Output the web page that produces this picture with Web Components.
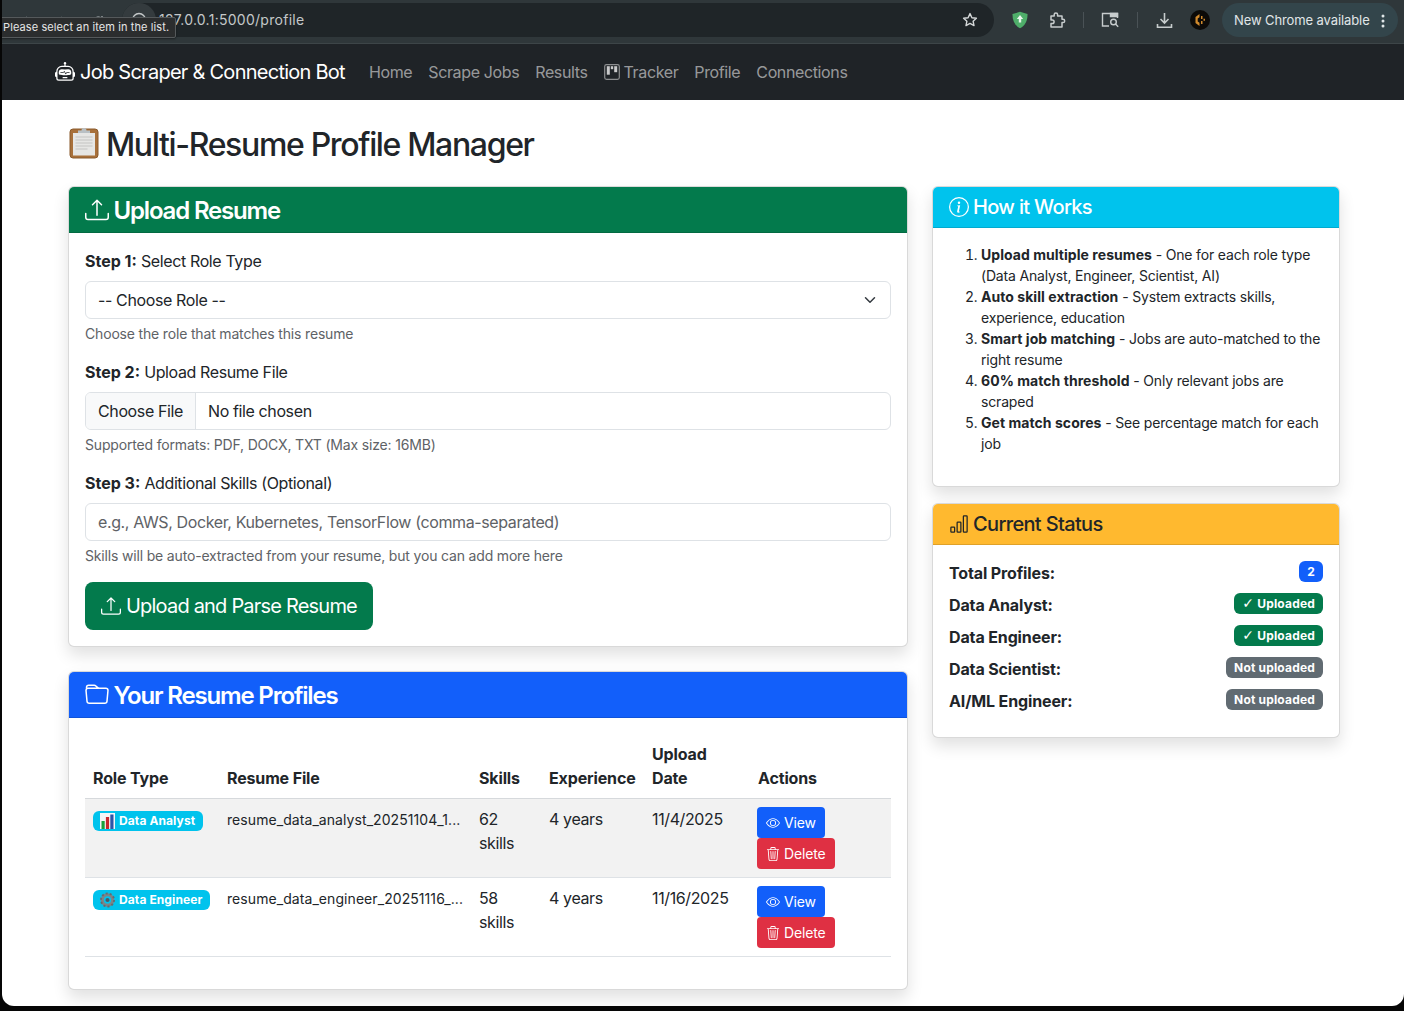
<!DOCTYPE html>
<html lang="en">
<head>
<meta charset="utf-8">
<title>Multi-Resume Profile Manager</title>
<style>
html, body { margin: 0; height: 100%; overflow: hidden; background: #060606; }
body { font-family: Inter, "Liberation Sans", sans-serif; font-size: 16px; line-height: 1.5; color: #212529; }
</style>
</head>
<body>
<app-window>
  <browser-bar></browser-bar>
  <nav-bar></nav-bar>
  <page-main>
    <page-title slot="title">Multi-Resume Profile Manager</page-title>
    <app-card slot="left" tone="success" size="24" icon="upload" heading="Upload Resume">
      <form-step label="Step 1:" rest="Select Role Type" help="Choose the role that matches this resume">
        <select-box>-- Choose Role --</select-box>
      </form-step>
      <form-step label="Step 2:" rest="Upload Resume File" help="Supported formats: PDF, DOCX, TXT (Max size: 16MB)">
        <file-box></file-box>
      </form-step>
      <form-step label="Step 3:" rest="Additional Skills (Optional)" help="Skills will be auto-extracted from your resume, but you can add more here">
        <text-box>e.g., AWS, Docker, Kubernetes, TensorFlow (comma-separated)</text-box>
      </form-step>
      <big-button>Upload and Parse Resume</big-button>
    </app-card>
    <app-card slot="left" tone="primary" size="24" icon="folder" heading="Your Resume Profiles">
      <profile-table></profile-table>
    </app-card>
    <app-card slot="right" tone="info" size="20" icon="info" heading="How it Works">
      <how-list></how-list>
    </app-card>
    <app-card slot="right" tone="warning" size="20" icon="bars" heading="Current Status">
      <status-row label="Total Profiles:" tone="primary">2</status-row>
      <status-row label="Data Analyst:" tone="success"><span style="font-family:'DejaVu Sans',sans-serif;font-size:14px;line-height:1">✓</span> Uploaded</status-row>
      <status-row label="Data Engineer:" tone="success"><span style="font-family:'DejaVu Sans',sans-serif;font-size:14px;line-height:1">✓</span> Uploaded</status-row>
      <status-row label="Data Scientist:" tone="muted">Not uploaded</status-row>
      <status-row label="AI/ML Engineer:" tone="muted">Not uploaded</status-row>
    </app-card>
  </page-main>
</app-window>
<script>
var fontStack = 'Inter, "Liberation Sans", sans-serif'
var tones = {
  success: ['#037a4c', '#fff'],
  primary: ['#125ffa', '#fff'],
  info: ['#00c3ed', '#fff'],
  warning: ['#ffb92f', '#212529'],
  danger: ['#df3043', '#fff'],
  muted: ['#616b72', '#fff']
}
var iconPaths = {
  upload: '<path d="M.5 9.9a.5.5 0 0 1 .5.5v2.5a1 1 0 0 0 1 1h12a1 1 0 0 0 1-1v-2.5a.5.5 0 0 1 1 0v2.5a2 2 0 0 1-2 2H2a2 2 0 0 1-2-2v-2.5a.5.5 0 0 1 .5-.5z"/><path d="M7.646 1.146a.5.5 0 0 1 .708 0l3 3a.5.5 0 0 1-.708.708L8.5 2.707V11.5a.5.5 0 0 1-1 0V2.707L5.354 4.854a.5.5 0 1 1-.708-.708l3-3z"/>',
  folder: '<path d="M.54 3.87.5 3a2 2 0 0 1 2-2h3.672a2 2 0 0 1 1.414.586l.828.828A2 2 0 0 0 9.828 3h3.982a2 2 0 0 1 1.992 2.181l-.637 7A2 2 0 0 1 13.174 14H2.826a2 2 0 0 1-1.991-1.819l-.637-7a1.99 1.99 0 0 1 .342-1.31zM2.19 4a1 1 0 0 0-.996 1.09l.637 7a1 1 0 0 0 .995.91h10.348a1 1 0 0 0 .995-.91l.637-7A1 1 0 0 0 13.81 4H2.19zm4.69-1.707A1 1 0 0 0 6.172 2H2.5a1 1 0 0 0-1 .981l.006.139C1.72 3.042 1.95 3 2.19 3h5.396l-.707-.707z"/>',
  info: '<path d="M8 15A7 7 0 1 1 8 1a7 7 0 0 1 0 14zm0 1A8 8 0 1 0 8 0a8 8 0 0 0 0 16z"/><path d="m8.93 6.588-2.29.287-.082.38.45.083c.294.07.352.176.288.469l-.738 3.468c-.194.897.105 1.319.808 1.319.545 0 1.178-.252 1.465-.598l.088-.416c-.2.176-.492.246-.686.246-.275 0-.375-.193-.304-.533L8.93 6.588zM9 4.5a1 1 0 1 1-2 0 1 1 0 0 1 2 0z"/>',
  bars: '<path d="M4 11H2v3h2v-3zm5-4H7v7h2V7zm5-5v12h-2V2h2zm-2-1a1 1 0 0 0-1 1v12a1 1 0 0 0 1 1h2a1 1 0 0 0 1-1V2a1 1 0 0 0-1-1h-2zM6 7a1 1 0 0 1 1-1h2a1 1 0 0 1 1 1v7a1 1 0 0 1-1 1H7a1 1 0 0 1-1-1V7zm-5 4a1 1 0 0 1 1-1h2a1 1 0 0 1 1 1v3a1 1 0 0 1-1 1H2a1 1 0 0 1-1-1v-3z"/>',
  eye: '<path d="M16 8s-3-5.5-8-5.5S0 8 0 8s3 5.5 8 5.5S16 8 16 8zM1.173 8a13.133 13.133 0 0 1 1.66-2.043C4.12 4.668 5.88 3.5 8 3.5c2.12 0 3.879 1.168 5.168 2.457A13.133 13.133 0 0 1 14.828 8c-.058.087-.122.183-.195.288-.335.48-.83 1.12-1.465 1.755C11.879 11.332 10.119 12.5 8 12.5c-2.12 0-3.879-1.168-5.168-2.457A13.134 13.134 0 0 1 1.172 8z"/><path d="M8 5.5a2.5 2.5 0 1 0 0 5 2.5 2.5 0 0 0 0-5zM4.5 8a3.5 3.5 0 1 1 7 0 3.5 3.5 0 0 1-7 0z"/>',
  trash: '<path d="M6.5 1h3a.5.5 0 0 1 .5.5v1H6v-1a.5.5 0 0 1 .5-.5ZM11 2.5v-1A1.5 1.5 0 0 0 9.5 0h-3A1.5 1.5 0 0 0 5 1.5v1H2.506a.58.58 0 0 0-.01 0H1.5a.5.5 0 0 0 0 1h.538l.853 10.66A2 2 0 0 0 4.885 16h6.23a2 2 0 0 0 1.994-1.84l.853-10.66h.538a.5.5 0 0 0 0-1h-.995a.59.59 0 0 0-.01 0H11Zm1.958 1-.846 10.58a1 1 0 0 1-.997.92h-6.23a1 1 0 0 1-.997-.92L3.042 3.5h9.916Zm-7.487 1a.5.5 0 0 1 .528.47l.5 8.5a.5.5 0 0 1-.998.06L5 5.03a.5.5 0 0 1 .47-.53Zm5.058 0a.5.5 0 0 1 .47.53l-.5 8.5a.5.5 0 1 1-.998-.06l.5-8.5a.5.5 0 0 1 .528-.47ZM8 4.5a.5.5 0 0 1 .5.5v8.5a.5.5 0 0 1-1 0V5a.5.5 0 0 1 .5-.5Z"/>',
  robot: '<path d="M6 12.5a.5.5 0 0 1 .5-.5h3a.5.5 0 0 1 0 1h-3a.5.5 0 0 1-.5-.5ZM3 8.062C3 6.76 4.235 5.765 5.53 5.886a26.58 26.58 0 0 0 4.94 0C11.765 5.765 13 6.76 13 8.062v1.157a.933.933 0 0 1-.765.935c-.845.147-2.34.346-4.235.346-1.895 0-3.39-.2-4.235-.346A.933.933 0 0 1 3 9.219V8.062Zm4.542-.827a.25.25 0 0 0-.217.068l-.92.9a24.767 24.767 0 0 1-1.871-.183.25.25 0 0 0-.068.495c.55.076 1.232.149 2.02.193a.25.25 0 0 0 .189-.071l.754-.736.847 1.71a.25.25 0 0 0 .404.062l.932-.97a25.286 25.286 0 0 0 1.922-.188.25.25 0 0 0-.068-.495c-.538.074-1.207.145-1.98.189a.25.25 0 0 0-.166.076l-.754.785-.842-1.7a.25.25 0 0 0-.182-.135Z"/><path d="M8.5 1.866a1 1 0 1 0-1 0V3h-2A4.5 4.5 0 0 0 1 7.5V8a1 1 0 0 0-1 1v2a1 1 0 0 0 1 1v1a2 2 0 0 0 2 2h10a2 2 0 0 0 2-2v-1a1 1 0 0 0 1-1V9a1 1 0 0 0-1-1v-.5A4.5 4.5 0 0 0 10.5 3h-2V1.866ZM14 7.5V13a1 1 0 0 1-1 1H3a1 1 0 0 1-1-1V7.5A3.5 3.5 0 0 1 5.5 4h5A3.5 3.5 0 0 1 14 7.5Z"/>',
  chevron: '<path fill="none" stroke="currentColor" stroke-width="2" stroke-linecap="round" stroke-linejoin="round" d="m2 5 6 6 6-6"/>'
}
function icon(name, size) {
  return `<svg width="${size}" height="${size}" viewBox="0 0 16 16" fill="currentColor" style="display:block;flex:none">${iconPaths[name]}</svg>`
}
var chartEmoji = `<svg width="15" height="16" viewBox="0 0 15 16" style="display:block;flex:none"><rect x="0" y="0" width="15" height="16" fill="#f4f6f7"/><rect x="1.5" y="8" width="3.2" height="8" fill="#1aa03c"/><rect x="5.9" y="4" width="3.2" height="12" fill="#c8262c"/><rect x="10.3" y="1.5" width="3.2" height="14.5" fill="#2c55a8"/></svg>`
var gearEmoji = `<svg width="15" height="16" viewBox="0 0 16 16" style="display:block;flex:none"><circle cx="8" cy="8" r="5.6" fill="none" stroke="#7c8488" stroke-width="3.4"/><circle cx="8" cy="8" r="7" fill="none" stroke="#656c70" stroke-width="2" stroke-dasharray="2.2 2.2"/><circle cx="8" cy="8" r="2.2" fill="#4a5a66"/></svg>`

class AppWindow extends HTMLElement {
  connectedCallback() {
    var shadow = this.attachShadow({mode: 'open'})
    shadow.innerHTML = `<style>
:host {
  display: flex;
  flex-direction: column;
  height: 1006px;
  margin-left: 2px;
  background: #fff;
  border-radius: 0 0 12px 12px;
  overflow: hidden;
}
</style><slot></slot>`
  }
}
customElements.define('app-window', AppWindow)

class BrowserBar extends HTMLElement {
  connectedCallback() {
    var shadow = this.attachShadow({mode: 'open'})
    shadow.innerHTML = `<style>
:host {
  display: flex;
  align-items: center;
  height: 43px;
  flex: none;
  margin-left: -2px;
  background: #2f373a;
  border-bottom: 1px solid #3d4548;
  color: #c7cccd;
  font-family: ${fontStack};
  position: relative;
}
#navs { display: flex; gap: 22px; width: 122px; padding-left: 19px; box-sizing: border-box; flex: none; }
#pill {
  width: 872px;
  height: 34px;
  margin-top: -3px;
  background: #1f2528;
  border-radius: 17px;
  display: flex;
  align-items: center;
  box-sizing: border-box;
  flex: none;
}
#site {
  width: 34px; height: 34px; border-radius: 50%;
  background: #343b3e; display: flex; align-items: center; justify-content: center; flex: none;
}
#url { margin-left: 3px; font-size: 14px; letter-spacing: .27px; color: #c4c8c9; flex: 1; margin-top: -1px; }
#star { margin-right: 16px; }
#tools { display: flex; align-items: center; margin-top: -3px; flex: none; }
.sep { width: 1px; height: 16px; background: #4a5256; }
#avatar { width: 20px; height: 20px; border-radius: 50%; background: #0c0a08; display: flex; align-items: center; justify-content: center; }
#update {
  margin-left: 12px;
  width: 176px; height: 34px; box-sizing: border-box;
  background: #33454b; border-radius: 17px;
  padding: 1px 0 0 12px;
  display: flex; align-items: center; justify-content: space-between;
  font-size: 13px; letter-spacing: -.1px; color: #e0e6e8; white-space: nowrap;
}
#tip {
  position: absolute; left: 0; top: 17px;
  height: 21px; width: 176px; box-sizing: border-box;
  background: #2b2d2e; border: 1px solid #55595b; border-radius: 2px;
  padding-left: 2px;
  font-size: 11px; letter-spacing: .1px; line-height: 19px; color: #e6e6e6; white-space: nowrap;
  box-shadow: 0 1px 2px rgba(0,0,0,.4);
}
</style>
<div id="navs">
  <svg width="14" height="14" viewBox="0 0 14 14" fill="none" stroke="#9aa0a2" stroke-width="1.5"><path d="M8 2 3 7l5 5"/></svg>
  <svg width="14" height="14" viewBox="0 0 14 14" fill="none" stroke="#6f7678" stroke-width="1.5"><path d="m6 2 5 5-5 5"/></svg>
  <svg width="14" height="14" viewBox="0 0 14 14" fill="none" stroke="#9aa0a2" stroke-width="1.5"><path d="M12 7a5 5 0 1 1-1.5-3.5M11 1v3H8"/></svg>
</div>
<div id="pill">
  <div id="site"><svg width="16" height="16" viewBox="0 0 16 16" fill="none" stroke="#c4c8c9" stroke-width="1.4"><circle cx="8" cy="8" r="6.5"/></svg></div>
  <div id="url">127.0.0.1:5000/profile</div>
  <svg id="star" width="16" height="16" viewBox="0 0 16 16" fill="none" stroke="#d5d8d9" stroke-width="1.4" stroke-linejoin="round"><path d="m8 1.6 1.9 4.1 4.5.5-3.3 3 .9 4.4L8 11.4l-4 2.2.9-4.4-3.3-3 4.5-.5z"/></svg>
</div>
<div id="tools">
  <svg style="margin-left:18px" width="16" height="18" viewBox="0 0 16 18"><path d="M8 .8 15.500 3c.2 6.500-2.200 11.500-7.500 14.200C2.700 14.500.3 9.500.5 3z" fill="#4fae6a"/><path d="M8 4 4.800 8h2v3.500h2.400V8h2z" fill="#eaf6ee"/></svg>
  <svg style="margin-left:20px" width="18" height="18" viewBox="0 0 18 18" fill="none" stroke="#c7cccd" stroke-width="1.5" stroke-linejoin="round"><path d="M3 5h3.200V3.600a1.700 1.700 0 0 1 3.400 0V5H14v3.200h1a1.700 1.700 0 0 1 0 3.400h-1V16H3v-3.500h1.300a1.800 1.800 0 0 0 0-3.600H3z"/></svg>
  <div class="sep" style="margin-left:17px"></div>
  <svg style="margin-left:17px" width="19" height="16" viewBox="0 0 19 16" fill="none" stroke="#c7cccd" stroke-width="1.4"><path d="M8 14H1.500V1.500h15V6"/><path d="M9.500 1.500h7v3h-7z" fill="#c7cccd"/><circle cx="12.500" cy="10" r="2.800"/><path d="m14.500 12 2.700 2.700"/></svg>
  <div class="sep" style="margin-left:17px"></div>
  <svg style="margin-left:18px" width="17" height="17" viewBox="0 0 17 17" fill="none" stroke="#c7cccd" stroke-width="1.6"><path d="M8.500 1v9.500M4.500 7l4 4 4-4M1.500 12v3.200h14V12"/></svg>
  <div id="avatar" style="margin-left:17px"><svg width="12" height="14" viewBox="0 0 12 14"><path d="M5.500 1 1.500 4v6l4 3V9.800L3.700 8.500V5.500L5.500 4.200zM7 3v3h1.500V3zM7 8v3h1.500V8zM9.500 5.800h1.500v2H9.500z" fill="#d18a2c"/></svg></div>
  <div id="update">New Chrome available<svg style="margin-right:13px" width="4" height="14" viewBox="0 0 4 14" fill="#e0e6e8"><circle cx="2" cy="2" r="1.500"/><circle cx="2" cy="7" r="1.500"/><circle cx="2" cy="12" r="1.500"/></svg></div>
</div>
<div id="tip">Please select an item in the list.</div>`
  }
}
customElements.define('browser-bar', BrowserBar)

class NavBar extends HTMLElement {
  connectedCallback() {
    var shadow = this.attachShadow({mode: 'open'})
    shadow.innerHTML = `<style>
:host {
  display: flex;
  align-items: center;
  height: 56px;
  flex: none;
  padding-left: 53px;
  background: #1f2327;
  font-family: ${fontStack};
  font-size: 16px;
  letter-spacing: -.37px;
}
#brand { display: flex; align-items: center; gap: 5px; color: #fff; font-size: 20px; margin-right: 16px; white-space: nowrap; letter-spacing: -.74px; }
a { display: flex; align-items: center; gap: 4px; padding: 0 8px; color: rgba(255,255,255,.55); text-decoration: none; white-space: nowrap; }
</style>
<div id="brand">${icon('robot', 20)}Job Scraper &amp; Connection Bot</div>
<a>Home</a><a>Scrape Jobs</a><a>Results</a>
<a><svg width="16" height="16" viewBox="0 0 16 16" style="display:block"><rect x=".7" y=".7" width="14.600" height="14.600" rx="1.800" fill="none" stroke="#8c8e90" stroke-width="1.200"/><rect x="2.800" y="2.200" width="3" height="8.500" fill="#c9cacb"/><rect x="6.800" y="2.200" width="2.400" height="3" fill="#c9cacb"/><rect x="10.200" y="2.200" width="3" height="6" fill="#c9cacb"/></svg>Tracker</a>
<a>Profile</a><a>Connections</a>`
  }
}
customElements.define('nav-bar', NavBar)

class PageMain extends HTMLElement {
  connectedCallback() {
    var shadow = this.attachShadow({mode: 'open'})
    shadow.innerHTML = `<style>
:host { display: block; padding: 24px 0 0 66px; font-family: ${fontStack}; }
#cols { display: grid; grid-template-columns: 840px 408px; gap: 24px; align-items: start; }
#left { display: flex; flex-direction: column; gap: 24px; }
#right { display: flex; flex-direction: column; gap: 16px; }
</style>
<slot name="title"></slot>
<div id="cols">
  <div id="left"><slot name="left"></slot></div>
  <div id="right"><slot name="right"></slot></div>
</div>`
  }
}
customElements.define('page-main', PageMain)

class PageTitle extends HTMLElement {
  connectedCallback() {
    var shadow = this.attachShadow({mode: 'open'})
    shadow.innerHTML = `<style>
:host { display: flex; align-items: center; gap: 6px; margin-bottom: 24px; height: 38.4px; font-size: 32px; font-weight: 500; line-height: 1.2; color: #212529; white-space: nowrap; letter-spacing: -1.34px; }
span { margin-top: 2px; margin-bottom: -2px; }
</style>
<svg width="32" height="34" viewBox="0 0 32 34" style="display:block;flex:none">
  <rect x="2" y="3" width="28" height="29" rx="3" fill="#a8703a" stroke="#8a5a2c"/>
  <rect x="5" y="7" width="22" height="22.500" fill="#e6e6e4"/>
  <path d="M7.500 11h17M7.500 14h17M7.500 17h17M7.500 20h17M7.500 23h12" stroke="#cfcfcd" stroke-width="1.500"/>
  <path d="M10 7V4.500h3.500a2.500 2.500 0 0 1 5 0H22V7z" fill="#b9c0c4"/>
</svg><span><slot></slot></span>`
  }
}
customElements.define('page-title', PageTitle)

class AppCard extends HTMLElement {
  connectedCallback() {
    var tone = tones[this.getAttribute('tone')]
    var size = Number(this.getAttribute('size'))
    var shadow = this.attachShadow({mode: 'open'})
    shadow.innerHTML = `<style>
:host {
  display: block;
  background: #fff;
  border: 1px solid rgba(0,0,0,.15);
  border-radius: 6px;
  box-shadow: 0 8px 16px rgba(0,0,0,.12);
  font-family: ${fontStack};
  letter-spacing: -.38px;
}
#head {
  display: flex;
  align-items: center;
  gap: ${size == 24 ? 4.5 : 4}px;
  padding: 8px 16px;
  background: ${tone[0]};
  color: ${tone[1]};
  border-bottom: 1px solid rgba(0,0,0,.125);
  border-radius: 5px 5px 0 0;
  font-size: ${size}px;
  font-weight: ${size == 24 ? 600 : 500};
  line-height: 1.2;
  letter-spacing: ${size == 24 ? -1.17 : -.66}px;
}
#head span { margin-top: ${size == 24 ? 1.5 : 0}px; margin-bottom: ${size == 24 ? -1.5 : 0}px; }
#body { padding: 16px; }
</style>
<div id="head">${icon(this.getAttribute('icon'), size)}<span>${this.getAttribute('heading')}</span></div>
<div id="body"><slot></slot></div>`
  }
}
customElements.define('app-card', AppCard)

class FormStep extends HTMLElement {
  connectedCallback() {
    var shadow = this.attachShadow({mode: 'open'})
    shadow.innerHTML = `<style>
:host { display: block; margin-bottom: 16px; }
#label { margin-bottom: 8px; line-height: 24px; }
b { font-weight: 700; letter-spacing: 0; }
#help { margin-top: 4px; font-size: 14px; line-height: 21px; letter-spacing: -.17px; color: #5e6266; }
</style>
<div id="label"><b>${this.getAttribute('label')}</b> ${this.getAttribute('rest')}</div>
<slot></slot>
<div id="help">${this.getAttribute('help')}</div>`
  }
}
customElements.define('form-step', FormStep)

class SelectBox extends HTMLElement {
  connectedCallback() {
    var shadow = this.attachShadow({mode: 'open'})
    shadow.innerHTML = `<style>
:host {
  display: flex; align-items: center; justify-content: space-between;
  height: 38px; box-sizing: border-box; padding: 0 14px 0 12px;
  border: 1px solid #dee2e6; border-radius: 6px; background: #fff; color: #212529;
}
</style><slot></slot><span style="color:#343a40">${icon('chevron', 12)}</span>`
  }
}
customElements.define('select-box', SelectBox)

class FileBox extends HTMLElement {
  connectedCallback() {
    var shadow = this.attachShadow({mode: 'open'})
    shadow.innerHTML = `<style>
:host {
  display: flex; align-items: center;
  height: 38px; box-sizing: border-box;
  border: 1px solid #dee2e6; border-radius: 6px; background: #fff; overflow: hidden;
}
#pick { height: 100%; display: flex; align-items: center; padding: 0 12px; background: #f8f9fa; border-right: 1px solid #dee2e6; }
#name { padding-left: 12px; }
</style><div id="pick">Choose File</div><div id="name">No file chosen</div>`
  }
}
customElements.define('file-box', FileBox)

class TextBox extends HTMLElement {
  connectedCallback() {
    var shadow = this.attachShadow({mode: 'open'})
    shadow.innerHTML = `<style>
:host {
  display: flex; align-items: center;
  height: 38px; box-sizing: border-box; padding: 0 12px;
  border: 1px solid #dee2e6; border-radius: 6px; background: #fff; color: #5e6266;
}
</style><slot></slot>`
  }
}
customElements.define('text-box', TextBox)

class BigButton extends HTMLElement {
  connectedCallback() {
    var shadow = this.attachShadow({mode: 'open'})
    shadow.innerHTML = `<style>
:host {
  display: inline-flex; align-items: center; gap: 5px;
  height: 48px; box-sizing: border-box; padding: 0 16px;
  background: ${tones.success[0]}; color: #fff; border-radius: 8px;
  font-size: 20px; white-space: nowrap; letter-spacing: -.8px; vertical-align: top;
}
</style>${icon('upload', 20)}<slot></slot>`
  }
}
customElements.define('big-button', BigButton)

class HowList extends HTMLElement {
  connectedCallback() {
    var steps = [
      ['Upload multiple resumes', ' - One for each role type (Data Analyst, Engineer, Scientist, AI)'],
      ['Auto skill extraction', ' - System extracts skills, experience, education'],
      ['Smart job matching', ' - Jobs are auto-matched to the right resume'],
      ['60% match threshold', ' - Only relevant jobs are scraped'],
      ['Get match scores', ' - See percentage match for each job']
    ]
    var shadow = this.attachShadow({mode: 'open'})
    var items = ''
    for(var s of steps) {
      items += `<li><b>${s[0]}</b>${s[1]}</li>`
    }
    shadow.innerHTML = `<style>
:host { display: block; font-size: 14px; line-height: 21px; letter-spacing: -.17px; }
ol { margin: 0 0 16px; padding-left: 32px; }
b { font-weight: 700; letter-spacing: .05px; }
</style><ol>${items}</ol>`
  }
}
customElements.define('how-list', HowList)

class StatusRow extends HTMLElement {
  connectedCallback() {
    var tone = tones[this.getAttribute('tone')]
    var shadow = this.attachShadow({mode: 'open'})
    shadow.innerHTML = `<style>
:host { display: flex; justify-content: space-between; align-items: flex-start; height: 24px; margin-bottom: 8px; }
b { font-weight: 700; letter-spacing: -.13px; }
#badge {
  display: block; height: 21px; box-sizing: border-box; padding: 0 8px;
  background: ${tone[0]}; color: ${tone[1]}; border-radius: 6px;
  font-size: 12px; font-weight: 700; line-height: 21px; white-space: nowrap; letter-spacing: .18px;
}
</style><b>${this.getAttribute('label')}</b><span id="badge"><slot></slot></span>`
  }
}
customElements.define('status-row', StatusRow)

class ProfileTable extends HTMLElement {
  connectedCallback() {
    var rows = [
      {emoji: chartEmoji, role: 'Data Analyst', file: 'resume_data_analyst_20251104_1...', skills: '62 skills', exp: '4 years', date: '11/4/2025'},
      {emoji: gearEmoji, role: 'Data Engineer', file: 'resume_data_engineer_20251116_...', skills: '58 skills', exp: '4 years', date: '11/16/2025'}
    ]
    var body = ''
    for(var r of rows) {
      body += `<tr>
<td><span class="role">${r.emoji}${r.role}</span></td>
<td class="file">${r.file}</td>
<td>${r.skills}</td>
<td>${r.exp}</td>
<td>${r.date}</td>
<td><div class="acts">
<span class="btn view">${icon('eye', 14)}View</span>
<span class="btn del">${icon('trash', 14)}Delete</span>
</div></td>
</tr>`
    }
    var shadow = this.attachShadow({mode: 'open'})
    shadow.innerHTML = `<style>
:host { display: block; margin-bottom: 16px; }
table { width: 806px; table-layout: fixed; border-collapse: collapse; }
th, td { padding: 8px; text-align: left; border-bottom: 1px solid #dee2e6; vertical-align: top; }
th { vertical-align: bottom; font-weight: 700; letter-spacing: -.15px; }
thead th { border-bottom-color: #d6d9dc; }
tbody tr:nth-child(odd) td { background: #f2f2f2; }
.file { font-size: 14px; white-space: nowrap; line-height: 26px; letter-spacing: .07px; }
.role {
  display: inline-flex; align-items: center; gap: 4px;
  height: 20px; margin-top: 4px; padding: 0 8px 0 7px;
  background: ${tones.info[0]}; color: #fff; border-radius: 6px;
  font-size: 12px; font-weight: 700; white-space: nowrap; vertical-align: top; letter-spacing: .1px;
}
.acts { display: flex; flex-direction: column; align-items: flex-start; margin-left: -1px; }
.btn {
  display: inline-flex; align-items: center; gap: 4px;
  height: 31px; box-sizing: border-box; padding: 1px 9px 0;
  border-radius: 4px; color: #fff; font-size: 14px; white-space: nowrap; letter-spacing: -.15px;
}
.view { background: ${tones.primary[0]}; }
.del { background: ${tones.danger[0]}; }
</style>
<table>
<colgroup><col style="width:134px"><col style="width:252px"><col style="width:70px"><col style="width:103px"><col style="width:106px"><col style="width:141px"></colgroup>
<thead><tr><th>Role Type</th><th>Resume File</th><th>Skills</th><th>Experience</th><th>Upload Date</th><th>Actions</th></tr></thead>
<tbody>${body}</tbody>
</table>`
  }
}
customElements.define('profile-table', ProfileTable)
</script>
</body>
</html>
